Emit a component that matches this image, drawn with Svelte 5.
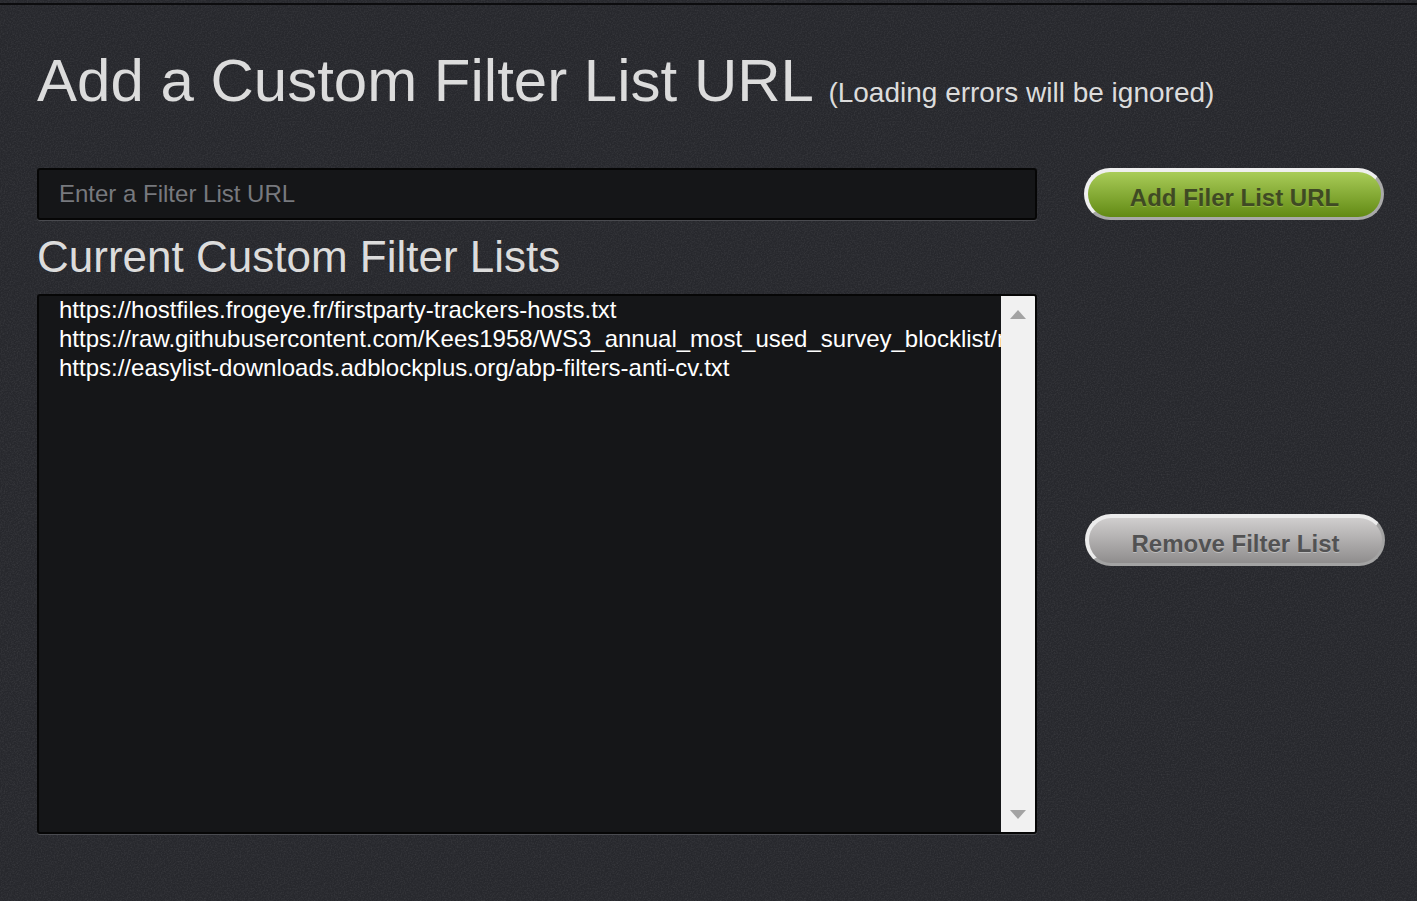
<script>
  const filterLists = [
    "https://hostfiles.frogeye.fr/firstparty-trackers-hosts.txt",
    "https://raw.githubusercontent.com/Kees1958/WS3_annual_most_used_survey_blocklist/master/EasyPrivacy_Top50.txt",
    "https://easylist-downloads.adblockplus.org/abp-filters-anti-cv.txt"
  ];
</script>

<div class="page">
  <div class="top-line"></div>
  <h1 class="title">Add a Custom Filter List URL <small>(Loading errors will be ignored)</small></h1>

  <div class="columns">
    <div class="left">
      <input class="url-input" type="text" placeholder="Enter a Filter List URL" />
      <h2 class="subtitle">Current Custom Filter Lists</h2>
      <div class="list-box">
        <div class="list-items">
          {#each filterLists as url}
            <div class="list-item">{url}</div>
          {/each}
        </div>
        <div class="scrollbar">
          <svg width="16" height="9" viewBox="0 0 16 9"><path d="M8 0L16 9H0z" fill="#a3a3a3" /></svg>
          <svg width="16" height="9" viewBox="0 0 16 9"><path d="M0 0H16L8 9z" fill="#a3a3a3" /></svg>
        </div>
      </div>
    </div>

    <div class="right">
      <button class="pill green">Add Filer List URL</button>
      <button class="pill grey">Remove Filter List</button>
    </div>
  </div>
</div>

<style>
  :global(body) {
    margin: 0;
    background: #2a2b30;
  }
  .page {
    height: 901px;
    box-sizing: border-box;
    padding: 3px 32px 0 37px;
    overflow: hidden;
    font-family: "Liberation Sans", Arial, sans-serif;
    background-color: #27282d;
    background-image: url("data:image/svg+xml,%3Csvg xmlns='http://www.w3.org/2000/svg' width='300' height='300'%3E%3Cfilter id='n'%3E%3CfeTurbulence type='fractalNoise' baseFrequency='.7' numOctaves='2' stitchTiles='stitch'/%3E%3CfeColorMatrix values='0 0 0 0 .5 0 0 0 0 .5 0 0 0 0 .5 .6 0 0 0 -.24'/%3E%3C/filter%3E%3Crect width='300' height='300' filter='url(%23n)' opacity='.35'/%3E%3C/svg%3E");
  }
  .top-line {
    height: 2px;
    margin: 0 -32px 0 -37px;
    background: #0c0c0e;
  }
  .title {
    margin: 36px 0 0;
    font-size: 60px;
    line-height: 80px;
    font-weight: 400;
    color: #dcdcdc;
    white-space: nowrap;
  }
  .title small {
    font-size: 28px;
    vertical-align: -1px;
  }
  .columns {
    display: flex;
    margin-top: 35px;
  }
  .left {
    width: 1000px;
    flex: none;
  }
  .url-input {
    display: block;
    box-sizing: border-box;
    width: 100%;
    height: 52px;
    padding: 0 20px;
    background: #151618;
    border: 2px solid #060606;
    border-radius: 3px;
    box-shadow: 0 1px 0 #4a4b50;
    outline: none;
    font-family: inherit;
    font-size: 24px;
    color: #ddd;
  }
  .url-input::placeholder {
    color: #77797e;
    opacity: 1;
  }
  .subtitle {
    margin: 12px 0 12px;
    font-size: 44px;
    line-height: 50px;
    font-weight: 400;
    color: #dcdcdc;
  }
  .list-box {
    display: flex;
    box-sizing: border-box;
    height: 540px;
    background: #151618;
    border: 2px solid #060606;
    border-radius: 3px;
    box-shadow: 0 1px 0 #4a4b50;
    overflow: hidden;
  }
  .list-items {
    flex: 1;
    min-width: 0;
    margin-top: -1px;
    overflow: hidden;
    padding-left: 20px;
  }
  .list-item {
    font-size: 24px;
    line-height: 29px;
    color: #fff;
    white-space: nowrap;
  }
  .scrollbar {
    flex: none;
    width: 34px;
    display: flex;
    flex-direction: column;
    justify-content: space-between;
    align-items: center;
    box-sizing: border-box;
    padding: 14px 0 13px;
    background: #f1f1f1;
  }
  .right {
    flex: 1;
    display: flex;
    flex-direction: column;
    align-items: flex-end;
    gap: 294px;
  }
  .pill {
    box-sizing: border-box;
    width: 300px;
    height: 52px;
    padding: 6px 0 0;
    border-radius: 26px;
    border-style: solid;
    border-width: 4px 3px 3px 4px;
    font-family: inherit;
    font-size: 24px;
    font-weight: 700;
  }
  .green {
    margin-right: 1px;
    border-color: #efefef #a9a9a9 #a9a9a9 #efefef;
    background: linear-gradient(#a9cc58, #628a14);
    color: #3f4a24;
    text-shadow: 0 1px 0 #8fb040;
  }
  .grey {
    border-color: #ececec #a3a3a3 #a3a3a3 #ececec;
    background: linear-gradient(#d0cece, #8f8d8d);
    color: #525253;
    text-shadow: 0 1px 0 #bdbdbd;
  }
</style>
